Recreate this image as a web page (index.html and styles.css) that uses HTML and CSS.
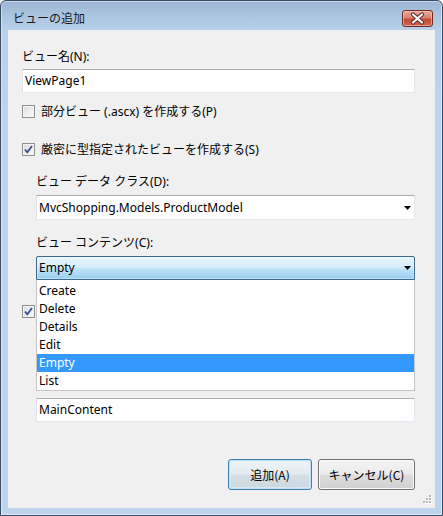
FILE: index.html
```html
<!DOCTYPE html>
<html lang="ja">
<head>
<meta charset="utf-8">
<title>ビューの追加</title>
<link rel="stylesheet" href="styles.css">
</head>
<body>
<div class="window">
  <div class="titlebar">
    <span class="title">ビューの追加</span>
    <span class="close">
      <svg width="29" height="15" viewBox="0 0 29 15">
        <path d="M10 3.5 L19 11.5 M19 3.5 L10 11.5" stroke="#5b2a22" stroke-width="4.2" stroke-linecap="round"/>
        <path d="M10 3.5 L19 11.5 M19 3.5 L10 11.5" stroke="#ffffff" stroke-width="2.2" stroke-linecap="round"/>
      </svg>
    </span>
  </div>
  <div class="client">
    <div class="label first">ビュー名(N):</div>
    <div class="textbox t-name">ViewPage1</div>

    <div class="check-row r1">
      <span class="checkbox"></span>
      <span class="check-text">部分ビュー (.ascx) を作成する(P)</span>
    </div>
    <div class="check-row r2">
      <span class="checkbox"><svg width="11" height="11" viewBox="0 0 11 11"><path d="M2 5.5 L4.3 8.3 L9 2" fill="none" stroke="#3b4e94" stroke-width="1.9"/></svg></span>
      <span class="check-text">厳密に型指定されたビューを作成する(S)</span>
    </div>

    <div class="indent">
      <div class="label l-data">ビュー データ クラス(D):</div>
      <div class="combo c-data">
        <span>MvcShopping.Models.ProductModel</span>
        <svg class="arrow" width="7" height="4" viewBox="0 0 7 4"><path d="M0 0 H7 L3.5 4 Z" fill="#000"/></svg>
      </div>
      <div class="label l-content">ビュー コンテンツ(C):</div>
      <div class="combo-wrap">
        <div class="combo open">
          <span>Empty</span>
          <svg class="arrow" width="7" height="4" viewBox="0 0 7 4"><path d="M0 0 H7 L3.5 4 Z" fill="#000"/></svg>
        </div>
        <ul class="dropdown">
          <li>Create</li>
          <li>Delete</li>
          <li>Details</li>
          <li>Edit</li>
          <li class="selected">Empty</li>
          <li>List</li>
        </ul>
      </div>
    </div>

    <div class="check-row r3">
      <span class="checkbox"><svg width="11" height="11" viewBox="0 0 11 11"><path d="M2 5.5 L4.3 8.3 L9 2" fill="none" stroke="#3b4e94" stroke-width="1.9"/></svg></span>
    </div>

    <div class="indent">
      <div class="textbox t-master"></div>
      <div class="label l-holder"></div>
      <div class="textbox t-main">MainContent</div>
    </div>

    <div class="buttons">
      <span class="button default">追加(A)</span>
      <span class="button cancel">キャンセル(C)</span>
    </div>

    <svg class="grip" width="10" height="10" viewBox="0 0 10 10">
      <g fill="#ffffff">
        <rect x="8" y="1" width="2" height="2"/><rect x="5" y="4" width="2" height="2"/><rect x="8" y="4" width="2" height="2"/>
        <rect x="2" y="7" width="2" height="2"/><rect x="5" y="7" width="2" height="2"/><rect x="8" y="7" width="2" height="2"/>
      </g>
      <g fill="#b8b8b8">
        <rect x="7" y="0" width="2" height="2"/><rect x="4" y="3" width="2" height="2"/><rect x="7" y="3" width="2" height="2"/>
        <rect x="1" y="6" width="2" height="2"/><rect x="4" y="6" width="2" height="2"/><rect x="7" y="6" width="2" height="2"/>
      </g>
    </svg>
  </div>
</div>
</body>
</html>
```

FILE: styles.css
```css
* {
  box-sizing: border-box;
}

html, body {
  margin: 0;
  padding: 0;
}

body {
  width: 443px;
  height: 516px;
  overflow: hidden;
  background: #ffffff;
  font-family: "Noto Sans", "Noto Sans CJK JP", sans-serif;
  font-size: 12px;
  line-height: 16px;
  color: #000000;
}

.window {
  width: 443px;
  height: 516px;
  border: 1px solid #3a4d62;
  border-radius: 6px 6px 0 0;
  background: linear-gradient(to bottom, #9bb5d3 0px, #abc4df 14px, #b8d0ea 29px, #bcd4ec 120px, #bcd4ec 100%);
  box-shadow: inset 0 0 0 1px rgba(255, 255, 255, 0.45);
  display: flex;
  flex-direction: column;
}

.titlebar {
  height: 29px;
  display: flex;
  align-items: flex-start;
  padding: 0 9px 0 12px;
}

.title {
  margin-top: 9px;
  color: #1a1a1a;
  font-family: "Noto Sans CJK JP", sans-serif;
  font-size: 12px;
  line-height: 16px;
}

.close {
  margin-left: auto;
  margin-top: 9px;
  width: 31px;
  height: 17px;
  border: 1px solid #6e2c22;
  border-radius: 3px;
  background: linear-gradient(to bottom, #e9a99a 0%, #d98371 45%, #c44a35 55%, #d2654f 100%);
  box-shadow: inset 0 0 0 1px rgba(255, 220, 210, 0.5);
  display: flex;
}

.close svg {
  display: block;
}

.client {
  flex: 1;
  margin: 0 7px 7px 7px;
  background: #f0f0f0;
  position: relative;
  padding: 19px 20px 0 14px;
}

.label {
  font-family: "Noto Sans", "Noto Sans CJK JP", sans-serif;
  line-height: 16px;
  height: 16px;
  white-space: nowrap;
  color: #000;
}

.textbox {
  height: 24px;
  background: #ffffff;
  border: 1px solid;
  border-color: #abadb3 #e3e9ef #e3e9ef #e2e3ea;
  padding-left: 2px;
  line-height: 22px;
  white-space: nowrap;
}

.t-name {
  margin-top: 4px;
}

.check-row {
  display: flex;
  align-items: center;
  height: 15px;
}

.r1 {
  margin-top: 11px;
}

.r2 {
  margin-top: 23px;
}

.r3 {
  margin-top: 24px;
}

.checkbox {
  width: 13px;
  height: 13px;
  flex: none;
  border: 1px solid #8e8f8f;
  background: linear-gradient(135deg, #d8d8d8 0%, #efefef 55%, #fbfbfb 100%);
  box-shadow: inset 0 0 0 1px #f4f4f4;
  display: flex;
  align-items: center;
  justify-content: center;
}

.checkbox svg {
  display: block;
}

.check-text {
  margin-left: 6px;
  white-space: nowrap;
  line-height: 16px;
}

.indent {
  padding-left: 14px;
}

.l-data {
  margin-top: 17px;
}

.combo {
  display: flex;
  align-items: center;
  border: 1px solid;
  padding-left: 2px;
  white-space: nowrap;
}

.combo .arrow {
  margin-left: auto;
  margin-right: 3px;
  display: block;
}

.c-data {
  margin-top: 5px;
  height: 25px;
  background: #ffffff;
  border-color: #abadb3 #e3e9ef #e3e9ef #e2e3ea;
}

.l-content {
  margin-top: 15px;
}

.combo-wrap {
  position: relative;
  margin-top: 5px;
}

.combo.open {
  height: 24px;
  border-color: #3c6a8e;
  border-radius: 2px 2px 0 0;
  background: linear-gradient(to bottom, #e8f5fc 0%, #d7eefb 45%, #bde3f8 55%, #98cdee 100%);
  box-shadow: inset 0 0 0 1px rgba(255, 255, 255, 0.35);
}

.dropdown {
  position: absolute;
  top: 100%;
  left: 0;
  right: 0;
  z-index: 10;
  margin: 0;
  padding: 2px 0 0 0;
  list-style: none;
  background: #ffffff;
  border: 1px solid #c4c4c4;
  border-top: none;
}

.dropdown li {
  height: 18px;
  line-height: 18px;
  padding-left: 2px;
  white-space: nowrap;
}

.dropdown li.selected {
  background: #3399ff;
  color: #ffffff;
}

.t-master {
  margin-top: 8px;
}

.l-holder {
  margin-top: 17px;
}

.t-main {
  margin-top: 14px;
}

.buttons {
  margin-top: 37px;
  display: flex;
  justify-content: flex-end;
  gap: 6px;
}

.button {
  height: 31px;
  border: 1px solid #707070;
  border-radius: 3px;
  display: flex;
  align-items: center;
  justify-content: center;
  font-family: "Noto Sans CJK JP", sans-serif;
  white-space: nowrap;
  background: linear-gradient(to bottom, #f3f3f3 0%, #ebebeb 48%, #dddddd 52%, #d0d0d0 100%);
  box-shadow: inset 0 0 0 1px #fcfcfc;
}

.button.default {
  width: 84px;
  border-color: #3c7fb1;
  background: linear-gradient(to bottom, #eef3f6 0%, #e3ebef 48%, #d4dfe5 52%, #cad9e0 100%);
  box-shadow: inset 0 0 0 1px #bfe3f6, inset 0 0 0 2px rgba(220, 240, 250, 0.6);
}

.button.cancel {
  width: 97px;
}

.grip {
  position: absolute;
  right: 3px;
  bottom: 3px;
  display: block;
}
```
